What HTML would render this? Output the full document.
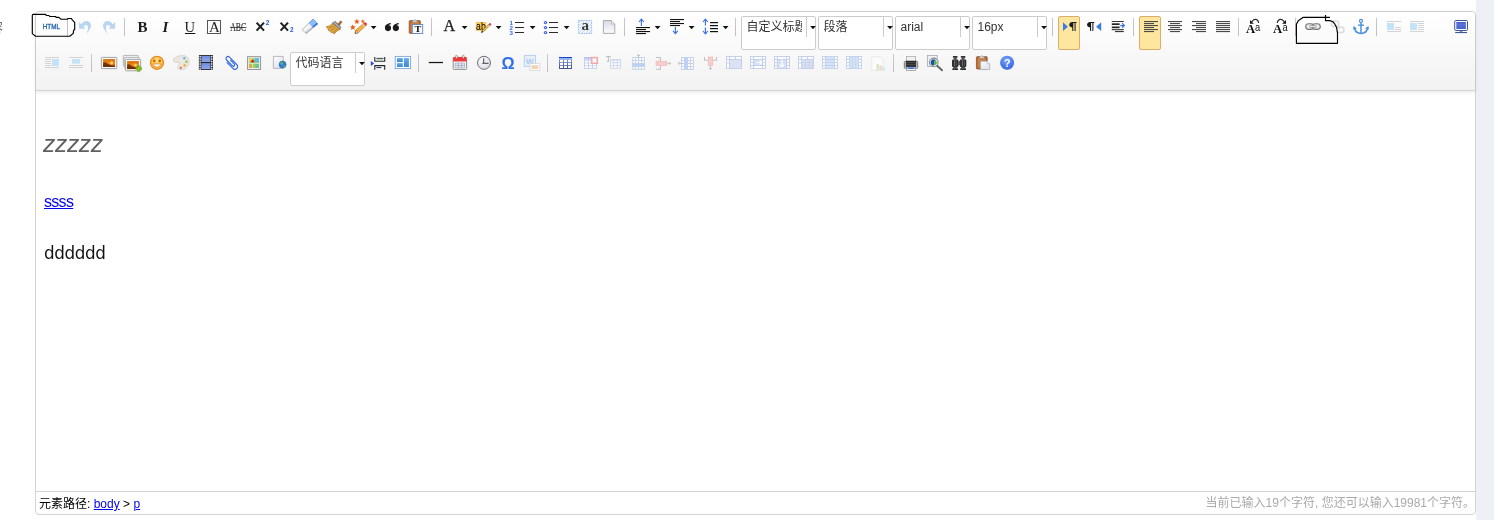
<!DOCTYPE html>
<html><head><meta charset="utf-8"><title>UEditor</title>
<style>
html,body{margin:0;padding:0;}
body{width:1494px;height:520px;overflow:hidden;background:#fff;position:relative;font-family:"Liberation Sans","Noto Sans CJK SC",sans-serif;}
.strip{position:absolute;left:1476px;top:0;width:18px;height:520px;background:#edf0f5;}
.edge{position:absolute;left:0;top:21px;font-size:13px;line-height:13px;color:#6a6a6a;width:3px;overflow:hidden;white-space:nowrap;direction:rtl;}
.ed{position:absolute;left:35px;top:11px;width:1439px;height:502px;border:1px solid #d4d4d4;border-radius:4px;background:#fff;}
.tb{position:absolute;left:0;top:0;width:1439px;height:78px;border-bottom:1px solid #d4d4d4;border-radius:3px 3px 0 0;background:linear-gradient(to bottom,#ffffff,#f2f2f2);box-shadow:0 1px 4px rgba(0,0,0,0.10);}
.cb{position:absolute;width:73px;height:32px;border:1px solid #ccc;border-radius:2px;background:#fff;}
.cb span{position:absolute;left:4.5px;top:0;width:55.5px;height:20px;line-height:20px;font-size:12px;color:#333;overflow:hidden;white-space:nowrap;}
.cb i{position:absolute;left:64px;top:0;width:0;height:20px;border-left:1px solid #ccc;}
.ck{position:absolute;width:20px;height:32px;border:1px solid #dcac6c;border-radius:2px;background:#ffe69f;}
.ct p{position:absolute;margin:0;white-space:nowrap;}
.bot{position:absolute;left:0;top:479px;width:1439px;height:22px;border-top:1px solid #d4d4d4;font-size:12px;line-height:20px;}
.bot .l{position:absolute;left:3px;top:2px;color:#000;}
.bot .r{position:absolute;right:0px;top:1px;color:#aaa;}
a{color:#0000ee;text-decoration:underline;}
svg{position:absolute;left:0;top:0;will-change:transform;}
.cb,.ct p,.bot,.edge{will-change:transform;}
svg text{font-family:"Liberation Sans","Noto Sans CJK SC",sans-serif;}
.sf{font-family:"Liberation Serif",serif !important;}
</style></head><body>
<div class="strip"></div>
<div class="edge">容</div>
<div class="ed">
<div class="tb"></div>

</div>
<div class="cb" style="left:741px;top:16px"><span>自定义标题</span><i></i></div>
<div class="cb" style="left:818px;top:16px"><span>段落</span><i></i></div>
<div class="cb" style="left:895px;top:16px"><span>arial</span><i></i></div>
<div class="cb" style="left:972px;top:16px"><span>16px</span><i></i></div>
<div class="cb" style="left:290px;top:52px"><span>代码语言</span><i></i></div>
<div class="ck" style="left:1058px;top:16px"></div><div class="ck" style="left:1139px;top:16px"></div>
<div class="ct">
<p style="left:43px;top:128px;font-size:24.6px;letter-spacing:-0.35px;line-height:32px;font-style:italic;color:#606060;">zzzzz</p>
<p style="left:44px;top:190px;font-size:16px;line-height:24px;letter-spacing:-0.7px;"><a>ssss</a></p>
<p style="left:43.5px;top:240.5px;font-size:16.8px;letter-spacing:-0.4px;line-height:24px;font-family:'DejaVu Sans',sans-serif;color:#111;">dddddd</p>
</div>
<div class="bot" style="left:36px;top:491px;position:absolute;"><span class="l">元素路径: <a>body</a> &gt; <a>p</a></span><span class="r">当前已输入19个字符, 您还可以输入19981个字符。</span></div>
<svg width="1494" height="100" viewBox="0 0 1494 100">
<defs>
<linearGradient id="sepg" x1="0" y1="0" x2="0" y2="1"><stop offset="0" stop-color="#c4c8d4"/><stop offset="0.5" stop-color="#c6c2c6"/><stop offset="1" stop-color="#c8bcbc"/></linearGradient>
<pattern id="hatch" width="2.4" height="2.4" patternUnits="userSpaceOnUse" patternTransform="rotate(45)"><rect width="2.4" height="2.4" fill="#fbfcff"/><rect width="0.9" height="2.4" fill="#c3d6f6"/></pattern>
<linearGradient id="pageg" x1="0" y1="0" x2="0.6" y2="1"><stop offset="0" stop-color="#ffffff"/><stop offset="1" stop-color="#dfe2ec"/></linearGradient>
<linearGradient id="pageg2" x1="0" y1="0" x2="0" y2="1"><stop offset="0" stop-color="#d6dae8"/><stop offset="0.6" stop-color="#eef0f6"/><stop offset="1" stop-color="#fbfbfd"/></linearGradient>
<linearGradient id="scrg" x1="0" y1="0" x2="0" y2="1"><stop offset="0" stop-color="#4458c4"/><stop offset="0.3" stop-color="#5a74d8"/><stop offset="1" stop-color="#4a62cc"/></linearGradient>
<linearGradient id="sung" x1="0" y1="0" x2="0" y2="1"><stop offset="0" stop-color="#d86a08"/><stop offset="0.55" stop-color="#f08a18"/><stop offset="1" stop-color="#a03c04"/></linearGradient>
<radialGradient id="faceg" cx="0.5" cy="0.35" r="0.7"><stop offset="0" stop-color="#ffe27a"/><stop offset="1" stop-color="#f8ac34"/></radialGradient>
<linearGradient id="filmg" x1="0" y1="0" x2="0" y2="1"><stop offset="0" stop-color="#6f8ce0"/><stop offset="1" stop-color="#8ea6ea"/></linearGradient>
<linearGradient id="tplg" x1="0" y1="0" x2="0" y2="1"><stop offset="0" stop-color="#66aeea"/><stop offset="1" stop-color="#3888d6"/></linearGradient>
<radialGradient id="clkg" cx="0.4" cy="0.35" r="0.8"><stop offset="0" stop-color="#fafafc"/><stop offset="1" stop-color="#d4d6e0"/></radialGradient>
<linearGradient id="tblg" x1="0" y1="0" x2="0" y2="1"><stop offset="0" stop-color="#1f40cc"/><stop offset="0.11" stop-color="#1f40cc"/><stop offset="0.12" stop-color="#8fb8f2"/><stop offset="0.2" stop-color="#8fb8f2"/><stop offset="0.22" stop-color="#7d94d2"/><stop offset="1" stop-color="#3b4d86"/></linearGradient>
<radialGradient id="helpg" cx="0.45" cy="0.3" r="0.8"><stop offset="0" stop-color="#78a4fa"/><stop offset="1" stop-color="#2c5ce0"/></radialGradient>
</defs>
<rect x="67" y="18" width="1" height="18" fill="url(#sepg)"/>
<rect x="124" y="18" width="1" height="18" fill="url(#sepg)"/>
<rect x="431" y="18" width="1" height="18" fill="url(#sepg)"/>
<rect x="624" y="18" width="1" height="18" fill="url(#sepg)"/>
<rect x="735" y="18" width="1" height="18" fill="url(#sepg)"/>
<rect x="1052" y="18" width="1" height="18" fill="url(#sepg)"/>
<rect x="1133" y="18" width="1" height="18" fill="url(#sepg)"/>
<rect x="1238" y="18" width="1" height="18" fill="url(#sepg)"/>
<rect x="1295" y="18" width="1" height="18" fill="url(#sepg)"/>
<rect x="1376" y="18" width="1" height="18" fill="url(#sepg)"/>
<text x="42.8" y="28.9" font-size="7" fill="#2a68b4" stroke="#2a68b4" stroke-width="0.35" textLength="17.2" lengthAdjust="spacingAndGlyphs">HTML</text>
<path d="M78.9,22 L78.9,28.7 L85.3,28.7 L83.4,26.7 Q86.3,23.6 88,26.6 Q88.6,30 86.3,33.7 Q90.8,29.5 91.1,25.6 Q90.2,21 86.4,21 Q83.4,21 81.3,24.3 Z" fill="#b9d5f1"/>
<path d="M78.9,22 L78.9,28.7 L85.3,28.7 L83.4,26.7 Q86.3,23.6 88,26.6 Q88.6,30 86.3,33.7 Q90.8,29.5 91.1,25.6 Q90.2,21 86.4,21 Q83.4,21 81.3,24.3 Z" fill="#b9d5f1" transform="translate(194,0) scale(-1,1)"/>
<text class="sf" x="137.6" y="31.9" font-size="15" font-weight="bold" fill="#1c1c1c">B</text>
<text class="sf" x="162.6" y="31.9" font-size="15" font-weight="bold" font-style="italic" fill="#1c1c1c">I</text>
<text class="sf" x="184.6" y="31.9" font-size="14.6" fill="#1c1c1c">U</text>
<rect x="185" y="33" width="10.3" height="1" fill="#111"/>
<rect x="207.5" y="20.5" width="13" height="13" fill="#fff" stroke="#555" stroke-width="1"/>
<text class="sf" x="208.9" y="32" font-size="15" fill="#222">A</text>
<text class="sf" x="230.2" y="30.7" font-size="11.8" fill="#2e2e2e" stroke="#2e2e2e" stroke-width="0.15" textLength="16" lengthAdjust="spacingAndGlyphs">ABC</text>
<rect x="230" y="27" width="16.3" height="0.9" fill="#3a3a3a"/>
<path d="M256.6,22.6 L264,30.6 M264,22.6 L256.6,30.6" stroke="#222" stroke-width="2.1" fill="none"/>
<text x="265.8" y="24.9" font-size="6.4" font-weight="bold" fill="#2255dd">2</text>
<path d="M280.6,22.6 L288,30.6 M288,22.6 L280.6,30.6" stroke="#222" stroke-width="2.1" fill="none"/>
<text x="289.9" y="32" font-size="6.4" font-weight="bold" fill="#2255dd">2</text>
<path d="M311.8,26.4 L313.2,27.8 L306.2,33.7 L304.8,32.3 Z" fill="#c2c5ca"/>
<path d="M308.7,23.3 L311.8,26.4 L304.8,32.3 L302.2,29.6 Z" fill="#f3f4f5"/>
<path d="M313,19.1 L316.5,22.5 L311.8,26.4 L308.7,23.3 Z" fill="#8cbff6"/>
<path d="M316.5,22.5 L317.9,23.9 L313.2,27.8 L311.8,26.4 Z" fill="#3f7de6"/>
<path d="M308.7,23.3 L302.2,29.6 L304.8,32.3 L306.2,33.7 L313.2,27.8" fill="none" stroke="#8e949c" stroke-width="0.6" stroke-linejoin="round"/>
<path d="M308.7,23.3 L313,19.1 L316.5,22.5 L317.9,23.9 L313.2,27.8" fill="none" stroke="#3b6fd0" stroke-width="0.6" stroke-linejoin="round"/>
<path d="M326.2,26.8 Q330,26.5 332.7,23.3 L340.2,29.2 Q336,31 334.2,33.9 Q332.5,32 331.2,32.6 Q330.2,30.4 328.6,30.6 Q328.2,28.2 326.2,26.8 Z" fill="#e2a840" stroke="#9a5a18" stroke-width="0.6"/>
<path d="M329.3,28 L333.8,25.6 M331,30.6 L335.6,27 M333.2,32.4 L337.6,28.6" stroke="#9a6424" stroke-width="0.6" fill="none"/>
<path d="M332.5,23 L335.2,21.2 L341,27 L340.2,29.3 Z" fill="#8b8f94" stroke="#5a5d62" stroke-width="0.5"/>
<path d="M334,22.4 L340.4,28.4" stroke="#d8dadd" stroke-width="0.7"/>
<path d="M338,24 L340.4,21 Q341.5,20.8 341.9,21.9 L339.6,25.2 Z" fill="#b5662a" stroke="#7c4218" stroke-width="0.5"/>
<path d="M355,33.6 L355.7,30.2 L363.6,23.2 L366,25.6 L358.2,32.8 Z" fill="#f2b13c" stroke="#a8702a" stroke-width="0.6"/>
<path d="M355,33.6 L355.7,30.2 L358.2,32.8 Z" fill="#e9d3a6" stroke="#7a5a30" stroke-width="0.5"/>
<path d="M355,33.6 L355.3,32.2 L356.2,33.1 Z" fill="#333"/>
<path d="M363.6,23.2 L364.6,22.4 Q366.2,22.2 366.8,24 L366,25.6 Z" fill="#e53b3b" stroke="#b02020" stroke-width="0.4"/>
<path d="M362.2,24.4 L364.7,26.9" stroke="#d9dbe0" stroke-width="1"/>
<polygon points="356.9,18.7 357.67,20.54 359.66,20.7 358.14,22 358.6,23.95 356.9,22.91 355.2,23.95 355.66,22 354.14,20.7 356.13,20.54" fill="#e65c14"/>
<polygon points="362.8,19.2 363.36,20.54 364.8,20.65 363.7,21.59 364.03,23 362.8,22.25 361.57,23 361.9,21.59 360.8,20.65 362.24,20.54" fill="#e65c14"/>
<polygon points="352.8,24.3 353.62,26.27 355.75,26.44 354.13,27.83 354.62,29.91 352.8,28.79 350.98,29.91 351.47,27.83 349.85,26.44 351.98,26.27" fill="#e65c14"/>
<path d="M370.7,26 h5.8 l-2.9,3.2 z" fill="#111"/>
<circle cx="388" cy="28.1" r="3.05" fill="#1a1a1a"/>
<path d="M384.95,28.3 C384.8,25 387.5,23.2 390.9,23 L390.9,24.2 C389,24.4 387.8,25.4 387.8,26.6 Z" fill="#1a1a1a"/>
<circle cx="395.9" cy="28.1" r="3.05" fill="#1a1a1a"/>
<path d="M392.85,28.3 C392.7,25 395.4,23.2 398.8,23 L398.8,24.2 C396.9,24.4 395.7,25.4 395.7,26.6 Z" fill="#1a1a1a"/>
<rect x="409.2" y="20.6" width="11.2" height="12.8" rx="1" fill="#b9692f" stroke="#8a4a1c" stroke-width="0.7"/>
<rect x="410.6" y="22.4" width="8.4" height="10" fill="#c98046"/>
<path d="M412.4,22.3 L412.4,20.6 L413.6,20.6 Q414.8,18.6 416,20.6 L417.2,20.6 L417.2,22.3 Z" fill="#d5d7dc" stroke="#8d9096" stroke-width="0.6"/>
<rect x="412.3" y="24.5" width="10.4" height="9" fill="#f7f9fd" stroke="#6584c4" stroke-width="0.9"/>
<text class="sf" x="414.5" y="32" font-size="8.8" font-weight="bold" fill="#111" textLength="6.8" lengthAdjust="spacingAndGlyphs">T</text>
<text class="sf" x="443.4" y="31.1" font-size="16.2" fill="#222" stroke="#222" stroke-width="0.25">A</text>
<path d="M461.7,26 h5.8 l-2.9,3.2 z" fill="#111"/>
<rect x="475.8" y="22" width="10.2" height="8.8" fill="#f8c55f"/>
<text x="476.1" y="30.4" font-size="10.8" fill="#000" textLength="9.6" lengthAdjust="spacingAndGlyphs">ab</text>
<path d="M481.2,32.7 L482.1,30.5 L488.9,24.1 L490.1,25.3 L483.4,31.8 Z" fill="#f6cc4c" stroke="#6a5018" stroke-width="0.5"/>
<path d="M481.2,32.7 L482.1,30.5 L483.4,31.8 Z" fill="#3a3020"/>
<path d="M488.8,24.2 L489.6,23.4 Q490.8,23.1 491.1,24.5 L490.2,25.6 Z" fill="#e44848" stroke="#a82828" stroke-width="0.4"/><path d="M487.9,25 L489.4,26.4" stroke="#ece6e0" stroke-width="0.8"/>
<path d="M495.7,26 h5.8 l-2.9,3.2 z" fill="#111"/>
<text x="509.6" y="24.7" font-size="6.2" font-weight="bold" fill="#3565e8">1</text>
<text x="509.6" y="29.7" font-size="6.2" font-weight="bold" fill="#3565e8">2</text>
<text x="509.6" y="34.6" font-size="6.2" font-weight="bold" fill="#3565e8">3</text>
<rect x="515" y="22" width="9" height="1" fill="#2a2a2a"/><rect x="515" y="27" width="9" height="1" fill="#2a2a2a"/><rect x="515" y="32" width="9" height="1" fill="#2a2a2a"/>
<path d="M529.7,26 h5.8 l-2.9,3.2 z" fill="#111"/>
<circle cx="545.5" cy="22.6" r="1.7" fill="#3a64f0"/><circle cx="545.5" cy="22.6" r="0.65" fill="#dbe6ff"/>
<circle cx="545.5" cy="27.6" r="1.7" fill="#3a64f0"/><circle cx="545.5" cy="27.6" r="0.65" fill="#dbe6ff"/>
<circle cx="545.5" cy="32.6" r="1.7" fill="#3a64f0"/><circle cx="545.5" cy="32.6" r="0.65" fill="#dbe6ff"/>
<rect x="549" y="22" width="9" height="1" fill="#2a2a2a"/><rect x="549" y="27" width="9" height="1" fill="#2a2a2a"/><rect x="549" y="32" width="9" height="1" fill="#2a2a2a"/>
<path d="M563.7,26 h5.8 l-2.9,3.2 z" fill="#111"/>
<rect x="578.4" y="20.5" width="13.2" height="13" fill="url(#hatch)" stroke="#98b8f0" stroke-width="1" stroke-dasharray="1.5,1"/>
<text class="sf" x="581.4" y="30.1" font-size="15" font-weight="bold" fill="#3a3a3a">a</text>
<path d="M603.4,20.5 L611.4,20.5 L614.8,23.9 L614.8,33.4 L603.4,33.4 Z" fill="url(#pageg2)" stroke="#a4a4a4" stroke-width="0.9"/>
<path d="M611.4,20.5 L611.4,23.9 L614.8,23.9" fill="#fff" stroke="#a9a9a9" stroke-width="0.8"/>
<path d="M641.4,25.9 L641.4,19" stroke="#3d6fe6" stroke-width="1.15" fill="none"/><path d="M639,22 L641.4,19.2 L643.8,22" stroke="#3d6fe6" stroke-width="1.15" fill="none"/>
<rect x="636" y="27" width="14" height="1.1" fill="#111"/><rect x="636" y="31" width="14" height="1.1" fill="#111"/>
<rect x="636" y="29" width="10" height="1.1" fill="#111"/><rect x="636" y="33" width="10" height="1.1" fill="#111"/>
<path d="M654.7,26 h5.8 l-2.9,3.2 z" fill="#111"/>
<rect x="670" y="19" width="14" height="1.1" fill="#111"/><rect x="670" y="23" width="14" height="1.1" fill="#111"/>
<rect x="670" y="21" width="10" height="1.1" fill="#111"/><rect x="670" y="25" width="10" height="1.1" fill="#111"/>
<path d="M675.4,27 L675.4,33.8" stroke="#3d6fe6" stroke-width="1.15" fill="none"/><path d="M673,30.8 L675.4,33.6 L677.8,30.8" stroke="#3d6fe6" stroke-width="1.15" fill="none"/>
<path d="M688.7,26 h5.8 l-2.9,3.2 z" fill="#111"/>
<path d="M705.4,25.6 L705.4,19" stroke="#3d6fe6" stroke-width="1.15" fill="none"/><path d="M703,22 L705.4,19.2 L707.8,22" stroke="#3d6fe6" stroke-width="1.15" fill="none"/>
<path d="M705.4,27.4 L705.4,34" stroke="#3d6fe6" stroke-width="1.15" fill="none"/><path d="M703,31 L705.4,33.8 L707.8,31" stroke="#3d6fe6" stroke-width="1.15" fill="none"/>
<rect x="710" y="22" width="8" height="1.2" fill="#111"/><rect x="710" y="25" width="8" height="1.2" fill="#111"/><rect x="710" y="28" width="8" height="1.2" fill="#111"/><rect x="710" y="31" width="8" height="1.2" fill="#111"/>
<path d="M722.7,26 h5.8 l-2.9,3.2 z" fill="#111"/>
<path d="M1063,22.3 L1067.9,26.65 L1063,31 Z" fill="#3b7be8"/>
<path d="M1072.3,22 h4.2 v0.9 h-0.9 v8.1 h-1.05 v-8.1 h-1.25 v8.1 h-1.05 v-3.6 a3.7,2.75 0 0 1 0,-5.4 z" fill="#1a1a1a"/>
<path d="M1090.1,22 h4.2 v0.9 h-0.9 v8.1 h-1.05 v-8.1 h-1.25 v8.1 h-1.05 v-3.6 a3.7,2.75 0 0 1 0,-5.4 z" fill="#1a1a1a"/>
<path d="M1101.2,22.3 L1096.1,26.65 L1101.2,31 Z" fill="#3b7be8"/>
<rect x="1111.8" y="21" width="12" height="0.9" fill="#222"/>
<rect x="1111.8" y="23.3" width="7.8" height="1.7" fill="#222"/><rect x="1111.8" y="26.5" width="7.8" height="1.7" fill="#222"/>
<rect x="1111.8" y="29.2" width="12" height="1" fill="#222"/>
<rect x="1115" y="31.1" width="8.8" height="1" fill="#222"/>
<path d="M1120.2,25.5 h3.6 M1122.1,23.3 L1124.4,25.5 L1122.1,27.7" stroke="#3b7be8" stroke-width="1.25" fill="none"/>
<rect x="1144" y="21" width="14" height="1.1" fill="#4a4a4a"/><rect x="1144" y="25" width="14" height="1.1" fill="#4a4a4a"/><rect x="1144" y="29" width="14" height="1.1" fill="#4a4a4a"/>
<rect x="1144" y="23" width="10" height="1.1" fill="#4a4a4a"/><rect x="1144" y="27" width="10" height="1.1" fill="#4a4a4a"/><rect x="1144" y="31" width="10" height="1.1" fill="#4a4a4a"/>
<rect x="1168" y="21" width="14" height="1.1" fill="#4a4a4a"/><rect x="1168" y="25" width="14" height="1.1" fill="#4a4a4a"/><rect x="1168" y="29" width="14" height="1.1" fill="#4a4a4a"/>
<rect x="1170" y="23" width="10" height="1.1" fill="#4a4a4a"/><rect x="1170" y="27" width="10" height="1.1" fill="#4a4a4a"/><rect x="1170" y="31" width="10" height="1.1" fill="#4a4a4a"/>
<rect x="1192" y="21" width="14" height="1.1" fill="#4a4a4a"/><rect x="1192" y="25" width="14" height="1.1" fill="#4a4a4a"/><rect x="1192" y="29" width="14" height="1.1" fill="#4a4a4a"/>
<rect x="1196" y="23" width="10" height="1.1" fill="#4a4a4a"/><rect x="1196" y="27" width="10" height="1.1" fill="#4a4a4a"/><rect x="1196" y="31" width="10" height="1.1" fill="#4a4a4a"/>
<rect x="1216" y="21" width="14" height="1.1" fill="#4a4a4a"/><rect x="1216" y="23" width="14" height="1.1" fill="#4a4a4a"/><rect x="1216" y="25" width="14" height="1.1" fill="#4a4a4a"/><rect x="1216" y="27" width="14" height="1.1" fill="#4a4a4a"/><rect x="1216" y="29" width="14" height="1.1" fill="#4a4a4a"/><rect x="1216" y="31" width="14" height="1.1" fill="#4a4a4a"/>
<text class="sf" x="1245.9" y="33" font-size="11.8" font-weight="bold" fill="#111" textLength="9.2" lengthAdjust="spacingAndGlyphs">A</text>
<text x="1255" y="31" font-size="11" fill="#111" textLength="5.2" lengthAdjust="spacingAndGlyphs">a</text>
<path d="M1251.6,22 Q1253.4,19.1 1255.6,19.2 Q1258.2,19.6 1258.7,22.8" stroke="#111" stroke-width="1.05" fill="none"/>
<path d="M1250,20 L1250,23.7 L1253.8,23.7 Z" fill="#111"/>
<text class="sf" x="1273" y="33" font-size="11.8" font-weight="bold" fill="#111" textLength="9.2" lengthAdjust="spacingAndGlyphs">A</text>
<text x="1282.6" y="31" font-size="11" fill="#111" textLength="5.2" lengthAdjust="spacingAndGlyphs">a</text>
<path d="M1277.2,22.8 Q1277.8,19.6 1280.4,19.2 Q1282.6,19.1 1284.4,22" stroke="#111" stroke-width="1.05" fill="none"/>
<path d="M1286,20 L1286,23.7 L1282.2,23.7 Z" fill="#111"/>
<rect x="1305.7" y="23.8" width="8" height="5.6" rx="2.8" fill="#dedede" stroke="#787878" stroke-width="1.1"/>
<rect x="1312.3" y="23.8" width="8" height="5.6" rx="2.8" fill="#dedede" stroke="#787878" stroke-width="1.1"/>
<rect x="1307.4" y="25.4" width="4.6" height="2.4" rx="1.2" fill="#fff"/><rect x="1314" y="25.4" width="4.6" height="2.4" rx="1.2" fill="#fff"/>
<rect x="1309.4" y="25.7" width="7.2" height="1.8" rx="0.9" fill="#f6f6f6" stroke="#808080" stroke-width="0.7"/>
<g fill="none" stroke="#dcdcdc" stroke-width="1.5"><rect x="1331.4" y="21" width="7.4" height="5.6" rx="2.6"/><rect x="1336.6" y="27" width="7.4" height="5.6" rx="2.6"/><path d="M1336,25 L1340,29"/></g>
<g fill="none" stroke="#4b90da" stroke-width="1.5"><circle cx="1361" cy="20.9" r="1.5" stroke-width="1.2"/><path d="M1361,22.6 L1361,33"/><path d="M1358,25.2 H1364" stroke-width="1.4"/><path d="M1354.4,28 Q1355.4,33.2 1361,33.4 Q1366.6,33.2 1367.6,28"/></g>
<path d="M1353,29.6 L1353.6,26 L1357,28.4 Z M1369,29.6 L1368.4,26 L1365,28.4 Z" fill="#4b90da"/>
<rect x="1387" y="21" width="14" height="1" fill="#d4d4d4"/><rect x="1387" y="31" width="14" height="1" fill="#d4d4d4"/>
<rect x="1395" y="27" width="6" height="1" fill="#d4d4d4"/><rect x="1395" y="29" width="6" height="1" fill="#d4d4d4"/>
<rect x="1387" y="23" width="7" height="7" fill="#c4e2f8"/>
<rect x="1410" y="21" width="14" height="1" fill="#d4d4d4"/><rect x="1410" y="31" width="14" height="1" fill="#d4d4d4"/>
<rect x="1418" y="23" width="6" height="1" fill="#d4d4d4"/><rect x="1418" y="25" width="6" height="1" fill="#d4d4d4"/><rect x="1418" y="27" width="6" height="1" fill="#d4d4d4"/><rect x="1418" y="29" width="6" height="1" fill="#d4d4d4"/>
<rect x="1410" y="23" width="7" height="7" fill="#c4e2f8"/>
<rect x="1454.7" y="20.5" width="12.8" height="10" rx="1.2" fill="#fff" stroke="#3c569c" stroke-width="1"/>
<rect x="1456.3" y="22" width="9.6" height="7" fill="url(#scrg)"/>
<rect x="1459.6" y="30.8" width="3" height="1.4" fill="#7d90c4"/>
<rect x="1455.2" y="32" width="11.8" height="1.1" fill="#3c569c"/>
<rect x="91" y="54" width="1" height="18" fill="url(#sepg)"/>
<rect x="418" y="54" width="1" height="18" fill="url(#sepg)"/>
<rect x="547" y="54" width="1" height="18" fill="url(#sepg)"/>
<rect x="893" y="54" width="1" height="18" fill="url(#sepg)"/>
<rect x="45" y="57" width="14" height="1" fill="#d4d4d4"/><rect x="45" y="67" width="14" height="1" fill="#d4d4d4"/>
<rect x="45" y="59" width="6" height="1" fill="#d4d4d4"/><rect x="45" y="61" width="6" height="1" fill="#d4d4d4"/><rect x="45" y="63" width="6" height="1" fill="#d4d4d4"/><rect x="45" y="65" width="6" height="1" fill="#d4d4d4"/>
<rect x="52" y="59" width="7" height="7" fill="#c4e2f8"/>
<rect x="69" y="57" width="14" height="1" fill="#d4d4d4"/><rect x="69" y="65" width="14" height="1" fill="#d4d4d4"/><rect x="69" y="67" width="14" height="1" fill="#d4d4d4"/>
<rect x="72" y="59" width="8" height="4.6" fill="#c4e2f8"/>
<rect x="101.4" y="57.4" width="15.4" height="11.2" rx="0.8" fill="#fafafa" stroke="#9a9a9a" stroke-width="0.9"/><rect x="103.1" y="59.1" width="12" height="7.8" fill="url(#sung)"/><circle cx="111.56" cy="63" r="1.7" fill="#f8cf68" opacity="0.9"/><path d="M103.1,62.44 Q106.02,61.32 108.33,64.34 L115.1,66.14 L115.1,66.9 L103.1,66.9 Z" fill="#5a2408" opacity="0.8"/>
<rect x="123.3" y="55.4" width="15" height="10.6" rx="0.8" fill="#f4f4f4" stroke="#a6a6a6" stroke-width="0.8"/>
<rect x="124.3" y="57.4" width="15" height="10.6" rx="0.8" fill="#f4f4f4" stroke="#a6a6a6" stroke-width="0.8"/>
<rect x="125.4" y="59.4" width="15.2" height="11.4" rx="0.8" fill="#fafafa" stroke="#9a9a9a" stroke-width="0.9"/><rect x="127.1" y="61.1" width="11.8" height="8" fill="url(#sung)"/><circle cx="135.43" cy="65.1" r="1.7" fill="#f8cf68" opacity="0.9"/><path d="M127.1,64.53 Q129.96,63.39 132.24,66.47 L138.9,68.29 L138.9,69.1 L127.1,69.1 Z" fill="#5a2408" opacity="0.8"/>
<path d="M135.7,67.5 h1.9 v-1.9 h2.2 v1.9 h1.9 v2.2 h-1.9 v1.9 h-2.2 v-1.9 h-1.9 z" fill="#86c11a" stroke="#5f9a08" stroke-width="0.4"/>
<circle cx="157" cy="62.8" r="6.5" fill="url(#faceg)" stroke="#e8891c" stroke-width="1.3"/>
<ellipse cx="154.3" cy="60.9" rx="1.15" ry="1.45" fill="#c5560c"/><ellipse cx="159.7" cy="60.9" rx="1.15" ry="1.45" fill="#c5560c"/>
<path d="M152.6,64 Q157,70.4 161.4,64 Z" fill="#fff" stroke="#cf6a10" stroke-width="0.6"/>
<path d="M173.2,60.6 C173.6,56.6 181,54.4 186,56.2 C190.2,58 189.8,64.6 186.4,67.6 C183.4,70.4 178.6,70.6 177.8,68 C177.2,65.8 180,65.2 179.4,63 C178.6,61 173,63.6 173.2,60.6 Z" fill="#ebe7df" stroke="#cfcac0" stroke-width="0.7"/>
<circle cx="184.4" cy="58.2" r="1.2" fill="#6ab8e8"/><circle cx="186.4" cy="61.8" r="1.2" fill="#8cc84c"/><circle cx="184.6" cy="65.4" r="1.2" fill="#f0a030"/><circle cx="180.8" cy="67.8" r="1.1" fill="#e05a4a"/>
<rect x="198.9" y="55" width="14.1" height="15" fill="#2c2c2c"/>
<rect x="201.4" y="55.9" width="9" height="6" fill="url(#filmg)"/><rect x="201.4" y="63.1" width="9" height="6" fill="url(#filmg)"/>
<rect x="199.5" y="55.9" width="1.3" height="1.5" fill="#fff"/><rect x="211.1" y="55.9" width="1.3" height="1.5" fill="#fff"/>
<rect x="199.5" y="58.35" width="1.3" height="1.5" fill="#fff"/><rect x="211.1" y="58.35" width="1.3" height="1.5" fill="#fff"/>
<rect x="199.5" y="60.8" width="1.3" height="1.5" fill="#fff"/><rect x="211.1" y="60.8" width="1.3" height="1.5" fill="#fff"/>
<rect x="199.5" y="63.25" width="1.3" height="1.5" fill="#fff"/><rect x="211.1" y="63.25" width="1.3" height="1.5" fill="#fff"/>
<rect x="199.5" y="65.7" width="1.3" height="1.5" fill="#fff"/><rect x="211.1" y="65.7" width="1.3" height="1.5" fill="#fff"/>
<rect x="199.5" y="68.15" width="1.3" height="1.5" fill="#fff"/><rect x="211.1" y="68.15" width="1.3" height="1.5" fill="#fff"/>
<g transform="translate(231.2,62.8) rotate(45) scale(0.9)" fill="none" stroke="#2b62e0" stroke-width="1.2" stroke-linecap="round"><path d="M-3.4,3.1 L5.8,3.1 A3.1,3.1 0 0 0 5.8,-3.1 L-5.8,-3.1 A2.25,2.25 0 0 0 -5.8,1.4 L3.4,1.4 A1.45,1.45 0 0 0 3.4,-1.5 L-2.6,-1.5"/></g>
<rect x="247.6" y="56.7" width="13" height="12.8" fill="#ececec" stroke="#8c8c8c" stroke-width="0.9"/>
<rect x="249.2" y="58.3" width="9.8" height="9.6" fill="#8fd060"/>
<rect x="254.8" y="58.3" width="4.2" height="4.2" fill="#5cbcec"/><rect x="249.2" y="58.3" width="2.6" height="3" fill="#f0d050"/><rect x="249.2" y="64.6" width="3.4" height="3.3" fill="#f0a040"/><rect x="255.6" y="64.2" width="3.4" height="3.7" fill="#6ec0a0"/>
<path d="M252.6,58.3 V67.9 M249.2,63.4 H259" stroke="#f4f4e0" stroke-width="0.7"/>
<path d="M252.6,59.3 L254.5,61.2 L252.6,63.1 L250.7,61.2 Z" fill="#e02020"/>
<path d="M273.4,56.4 L283.2,56.4 L283.2,68.4 L273.4,68.4 Z" fill="url(#pageg)" stroke="#aaa" stroke-width="0.8"/>
<circle cx="282.6" cy="64.6" r="3.5" fill="#2f7cd8" stroke="#1c5aa8" stroke-width="0.5"/>
<path d="M280.4,62.6 Q282,61.6 283.2,62.8 Q283,64.6 281.4,65 Q280,64.4 280.4,62.6 Z M283.4,65.6 Q285,65 285.2,66.4 Q284.2,67.6 283.2,67 Z" fill="#6cc43c"/>
<path d="M370.8,60.9 L374.2,63.5 L370.8,66.1 Z" fill="#2a48d8"/>
<path d="M374.8,57 V61.2 H384.7 V57" stroke="#2a2a2a" stroke-width="1.1" fill="#f4f6f4"/>
<path d="M376.4,58.4 H383.4" stroke="#2a2a2a" stroke-width="0.9"/><path d="M376.4,59.4 H383.4" stroke="#9cc8b0" stroke-width="0.7"/>
<path d="M374.8,69.8 V65.6 H384.7 V69.8" stroke="#2a2a2a" stroke-width="1.1" fill="#f4f6f4"/>
<path d="M376.4,67.6 H381.2" stroke="#1c2c6c" stroke-width="1"/>
<rect x="395.2" y="56.4" width="15.4" height="12.2" fill="#fff" stroke="#7aa6dc" stroke-width="0.9"/>
<rect x="397" y="58.1" width="5.8" height="3.9" fill="url(#tplg)"/><rect x="397" y="63.1" width="5.8" height="3.9" fill="url(#tplg)"/><rect x="403.9" y="58.1" width="5" height="8.9" fill="url(#tplg)"/>
<rect x="428.8" y="61.9" width="14.2" height="1.25" fill="#151515"/>
<rect x="453.2" y="57.4" width="13.4" height="12" rx="0.8" fill="#fbfbfd" stroke="#727272" stroke-width="0.8"/>
<path d="M453.2,61.6 V58.2 Q453.2,57 454.4,57 H465.4 Q466.6,57 466.6,58.2 V61.6 Z" fill="#e93a3a"/>
<rect x="455.6" y="55.2" width="1.8" height="3.2" rx="0.8" fill="#f0f0f0" stroke="#a05050" stroke-width="0.5"/><rect x="462.4" y="55.2" width="1.8" height="3.2" rx="0.8" fill="#f0f0f0" stroke="#a05050" stroke-width="0.5"/>
<path d="M455.2,63 H464.6 V67.8 H455.2 Z M455.2,65.4 H464.6 M458.3,63 V67.8 M461.5,63 V67.8" fill="#e8ecf4" stroke="#98a2b8" stroke-width="0.7"/>
<circle cx="484" cy="62.8" r="6.5" fill="url(#clkg)" stroke="#6e6e6e" stroke-width="1"/>
<path d="M483.7,58.4 V63.3 H488.6 M482.3,63.3 H483.7" stroke="#222" stroke-width="0.85" fill="none"/>
<text x="501.4" y="68.8" font-size="16.4" font-weight="bold" fill="#2f6fe8">Ω</text>
<rect x="524.2" y="55.4" width="11.4" height="11" fill="#e6effb" stroke="#b4cdee" stroke-width="0.9"/>
<text x="525.9" y="64" font-size="8" font-weight="bold" fill="#a8c6ee">W</text>
<rect x="530" y="63.6" width="9.8" height="7" fill="#fcfcfc" stroke="#d6d6d6" stroke-width="0.8"/>
<rect x="531.6" y="65.2" width="6.6" height="3.8" fill="#f3d3b6"/>
<rect x="559" y="57" width="13" height="12" fill="url(#tblg)"/>
<rect x="560" y="59.8" width="3" height="2.25" fill="#fff"/>
<rect x="564" y="59.8" width="3" height="2.25" fill="#fff"/>
<rect x="568" y="59.8" width="3" height="2.25" fill="#fff"/>
<rect x="560" y="62.8" width="3" height="2.25" fill="#fff"/>
<rect x="564" y="62.8" width="3" height="2.25" fill="#fff"/>
<rect x="568" y="62.8" width="3" height="2.25" fill="#fff"/>
<rect x="560" y="65.8" width="3" height="2.25" fill="#fff"/>
<rect x="564" y="65.8" width="3" height="2.25" fill="#fff"/>
<rect x="568" y="65.8" width="3" height="2.25" fill="#fff"/>
<rect x="584" y="57" width="13" height="12" fill="#c8d2ec"/><rect x="585" y="58" width="3" height="1.75" fill="#fff"/><rect x="589" y="58" width="3" height="1.75" fill="#fff"/><rect x="593" y="58" width="3" height="1.75" fill="#fff"/><rect x="585" y="60.75" width="3" height="1.75" fill="#fff"/><rect x="589" y="60.75" width="3" height="1.75" fill="#fff"/><rect x="593" y="60.75" width="3" height="1.75" fill="#fff"/><rect x="585" y="63.5" width="3" height="1.75" fill="#fff"/><rect x="589" y="63.5" width="3" height="1.75" fill="#fff"/><rect x="593" y="63.5" width="3" height="1.75" fill="#fff"/><rect x="585" y="66.25" width="3" height="1.75" fill="#fff"/><rect x="589" y="66.25" width="3" height="1.75" fill="#fff"/><rect x="593" y="66.25" width="3" height="1.75" fill="#fff"/>
<rect x="584" y="57" width="13" height="2.4" fill="#b8c6f0"/>
<rect x="591.4" y="57.3" width="6.2" height="6.2" fill="#f7c4c4" stroke="#f0a4a4" stroke-width="0.9"/>
<path d="M593,58.9 L596,61.9 M596,58.9 L593,61.9" stroke="#fff" stroke-width="1.5"/>
<path d="M606,56.6 H611 M608.5,56.6 V61.4 H607" stroke="#c4c4c4" stroke-width="1.1" fill="none"/>
<rect x="610" y="59.4" width="11" height="9.4" fill="#d0d8ee"/><rect x="611" y="60.4" width="2.33" height="1.8" fill="#fff"/><rect x="614.33" y="60.4" width="2.33" height="1.8" fill="#fff"/><rect x="617.67" y="60.4" width="2.33" height="1.8" fill="#fff"/><rect x="611" y="63.2" width="2.33" height="1.8" fill="#fff"/><rect x="614.33" y="63.2" width="2.33" height="1.8" fill="#fff"/><rect x="617.67" y="63.2" width="2.33" height="1.8" fill="#fff"/><rect x="611" y="66" width="2.33" height="1.8" fill="#fff"/><rect x="614.33" y="66" width="2.33" height="1.8" fill="#fff"/><rect x="617.67" y="66" width="2.33" height="1.8" fill="#fff"/>
<rect x="610" y="59.4" width="11" height="1" fill="#c8d2ec"/>
<rect x="632.2" y="57" width="12.8" height="12.8" fill="#c8d2ec"/><rect x="633.2" y="58" width="1.95" height="1.95" fill="#fff"/><rect x="636.15" y="58" width="1.95" height="1.95" fill="#fff"/><rect x="639.1" y="58" width="1.95" height="1.95" fill="#fff"/><rect x="642.05" y="58" width="1.95" height="1.95" fill="#fff"/><rect x="633.2" y="60.95" width="1.95" height="1.95" fill="#fff"/><rect x="636.15" y="60.95" width="1.95" height="1.95" fill="#fff"/><rect x="639.1" y="60.95" width="1.95" height="1.95" fill="#fff"/><rect x="642.05" y="60.95" width="1.95" height="1.95" fill="#fff"/><rect x="633.2" y="63.9" width="1.95" height="1.95" fill="#fff"/><rect x="636.15" y="63.9" width="1.95" height="1.95" fill="#fff"/><rect x="639.1" y="63.9" width="1.95" height="1.95" fill="#fff"/><rect x="642.05" y="63.9" width="1.95" height="1.95" fill="#fff"/><rect x="633.2" y="66.85" width="1.95" height="1.95" fill="#fff"/><rect x="636.15" y="66.85" width="1.95" height="1.95" fill="#fff"/><rect x="639.1" y="66.85" width="1.95" height="1.95" fill="#fff"/><rect x="642.05" y="66.85" width="1.95" height="1.95" fill="#fff"/>
<rect x="632.2" y="63.6" width="12.8" height="2.8" fill="#bcd2f4"/>
<path d="M638.5,59 V54.4 M637,56 L638.5,54.4 L640,56" stroke="#c0c0c0" stroke-width="0.9" fill="none"/>
<path d="M656,57.5 H660.4 V69.3 H656" stroke="#c2c2c2" stroke-width="1.1" fill="none"/>
<rect x="656" y="61.2" width="10.8" height="4.4" fill="#f6cccc" stroke="#f0b4b4" stroke-width="0.6"/>
<path d="M667,63.4 H670.8 M669.2,61.9 L670.8,63.4 L669.2,64.9" stroke="#c0c0c0" stroke-width="0.9" fill="none"/>
<rect x="681" y="57" width="13" height="13" fill="#c8d2ec"/><rect x="682" y="58" width="2" height="2" fill="#fff"/><rect x="685" y="58" width="2" height="2" fill="#fff"/><rect x="688" y="58" width="2" height="2" fill="#fff"/><rect x="691" y="58" width="2" height="2" fill="#fff"/><rect x="682" y="61" width="2" height="2" fill="#fff"/><rect x="685" y="61" width="2" height="2" fill="#fff"/><rect x="688" y="61" width="2" height="2" fill="#fff"/><rect x="691" y="61" width="2" height="2" fill="#fff"/><rect x="682" y="64" width="2" height="2" fill="#fff"/><rect x="685" y="64" width="2" height="2" fill="#fff"/><rect x="688" y="64" width="2" height="2" fill="#fff"/><rect x="691" y="64" width="2" height="2" fill="#fff"/><rect x="682" y="67" width="2" height="2" fill="#fff"/><rect x="685" y="67" width="2" height="2" fill="#fff"/><rect x="688" y="67" width="2" height="2" fill="#fff"/><rect x="691" y="67" width="2" height="2" fill="#fff"/>
<rect x="684.4" y="57" width="3.4" height="13" fill="#bcd2f4"/>
<path d="M682.6,63.4 H678 M679.6,61.9 L678,63.4 L679.6,64.9" stroke="#c0c0c0" stroke-width="0.9" fill="none"/>
<path d="M704.5,57 V60.2 H716.5 V57" stroke="#c2c2c2" stroke-width="1.1" fill="none"/>
<rect x="708.2" y="57" width="4.6" height="8.6" fill="#f6cccc" stroke="#f0b4b4" stroke-width="0.6"/>
<path d="M710.5,65.8 V69.6 M709,68 L710.5,69.6 L712,68" stroke="#c0c0c0" stroke-width="0.9" fill="none"/>
<rect x="726" y="56" width="16" height="13" fill="#c6d0ea"/><rect x="727" y="57" width="2" height="2" fill="#fff"/><rect x="730" y="57" width="5" height="2" fill="#fff"/><rect x="736" y="57" width="5" height="2" fill="#fff"/><rect x="727" y="60" width="2" height="2.5" fill="#fff"/><rect x="727" y="63.5" width="2" height="4.5" fill="#fff"/><rect x="730" y="60" width="11" height="8" fill="#dbe2f4"/>
<rect x="750" y="56" width="16" height="13" fill="#c6d0ea"/><rect x="751" y="57" width="2" height="2" fill="#fff"/><rect x="754" y="57" width="8" height="2" fill="#fff"/><rect x="763" y="57" width="2" height="2" fill="#fff"/><rect x="751" y="60" width="2" height="2" fill="#fff"/><rect x="763" y="60" width="2" height="2" fill="#fff"/><rect x="751" y="63" width="2" height="2" fill="#fff"/><rect x="763" y="63" width="2" height="2" fill="#fff"/><rect x="751" y="66" width="2" height="2" fill="#fff"/><rect x="754" y="66" width="8" height="2" fill="#fff"/><rect x="763" y="66" width="2" height="2" fill="#fff"/><rect x="754" y="60" width="8" height="5" fill="#d4e2f6"/>
<path d="M756.6,62.5 H761.6 M759.6,60.5 L761.7,62.5 L759.6,64.5" stroke="#fff" stroke-width="1.1" fill="none"/>
<rect x="774" y="56" width="16" height="13" fill="#c6d0ea"/><rect x="775" y="57" width="2" height="2" fill="#fff"/><rect x="778" y="57" width="8" height="2" fill="#fff"/><rect x="787" y="57" width="2" height="2" fill="#fff"/><rect x="775" y="60" width="2" height="2" fill="#fff"/><rect x="787" y="60" width="2" height="2" fill="#fff"/><rect x="775" y="63" width="2" height="2" fill="#fff"/><rect x="787" y="63" width="2" height="2" fill="#fff"/><rect x="775" y="66" width="2" height="2" fill="#fff"/><rect x="787" y="66" width="2" height="2" fill="#fff"/><rect x="778" y="60" width="8" height="8" fill="#d4e0f6"/>
<path d="M782,59.6 V66.6 M779.8,64.6 L782,66.8 L784.2,64.6" stroke="#fff" stroke-width="1.2" fill="none"/>
<rect x="798" y="56" width="16" height="13" fill="#c6d0ea"/><rect x="799" y="57" width="2" height="2" fill="#fff"/><rect x="802" y="57" width="5" height="2" fill="#fff"/><rect x="808" y="57" width="5" height="2" fill="#fff"/><rect x="799" y="60" width="2" height="2.5" fill="#fff"/><rect x="799" y="63.5" width="2" height="4.5" fill="#fff"/><rect x="802" y="60" width="3" height="2" fill="#dde2f3"/><rect x="805.8" y="60" width="3" height="2" fill="#dde2f3"/><rect x="809.6" y="60" width="3" height="2" fill="#dde2f3"/><rect x="802" y="62.8" width="3" height="2" fill="#dde2f3"/><rect x="805.8" y="62.8" width="3" height="2" fill="#dde2f3"/><rect x="809.6" y="62.8" width="3" height="2" fill="#dde2f3"/><rect x="802" y="65.6" width="3" height="2" fill="#dde2f3"/><rect x="805.8" y="65.6" width="3" height="2" fill="#dde2f3"/><rect x="809.6" y="65.6" width="3" height="2" fill="#dde2f3"/>
<rect x="822" y="56" width="16" height="13" fill="#c4d4ee"/><rect x="823" y="57" width="2" height="2" fill="#fff"/><rect x="835" y="57" width="2" height="2" fill="#fff"/><rect x="826" y="57" width="8" height="2" fill="#d4e2f6"/><rect x="823" y="60" width="2" height="2" fill="#fff"/><rect x="835" y="60" width="2" height="2" fill="#fff"/><rect x="826" y="60" width="8" height="2" fill="#d4e2f6"/><rect x="823" y="63" width="2" height="2" fill="#fff"/><rect x="835" y="63" width="2" height="2" fill="#fff"/><rect x="826" y="63" width="8" height="2" fill="#d4e2f6"/><rect x="823" y="66" width="2" height="2" fill="#fff"/><rect x="835" y="66" width="2" height="2" fill="#fff"/><rect x="826" y="66" width="8" height="2" fill="#d4e2f6"/>
<rect x="846" y="56" width="16" height="13" fill="#c4d4ee"/><rect x="847" y="57" width="2" height="2" fill="#fff"/><rect x="859" y="57" width="2" height="2" fill="#fff"/><rect x="847" y="60" width="2" height="2" fill="#fff"/><rect x="859" y="60" width="2" height="2" fill="#fff"/><rect x="847" y="63" width="2" height="2" fill="#fff"/><rect x="859" y="63" width="2" height="2" fill="#fff"/><rect x="847" y="66" width="2" height="2" fill="#fff"/><rect x="859" y="66" width="2" height="2" fill="#fff"/><rect x="850" y="57" width="2.2" height="11" fill="#d4e2f6"/><rect x="852.9" y="57" width="2.2" height="11" fill="#d4e2f6"/><rect x="855.8" y="57" width="2.2" height="11" fill="#d4e2f6"/>
<path d="M871.8,56.8 L880.4,56.8 L883.2,59.6 L883.2,70.4 L871.8,70.4 Z" fill="#fbfbfb" stroke="#e6e6e6" stroke-width="0.8"/>
<rect x="876.4" y="64" width="2.6" height="6.6" fill="#d6e9cc"/><rect x="879.4" y="65.6" width="2.6" height="5" fill="#f4d9c6"/><rect x="882.4" y="67" width="2.4" height="3.6" fill="#d0e5f4"/>
<rect x="906.4" y="56.4" width="9.2" height="5" fill="#f1f1f3" stroke="#adadad" stroke-width="0.8"/>
<rect x="904.3" y="61.4" width="13.4" height="7" rx="1" fill="#dcdcdc" stroke="#5a5a5a" stroke-width="0.8"/>
<rect x="905.8" y="60.8" width="10.4" height="6.6" fill="#2a2a2a"/>
<path d="M905.8,62.6 H916.2 M905.8,64.6 H916.2" stroke="#5a5a5a" stroke-width="0.7"/>
<rect x="906.6" y="67.2" width="8.8" height="3.4" fill="#fdfdfd" stroke="#8a8a8a" stroke-width="0.7"/>
<rect x="907.6" y="67.6" width="6.8" height="1.3" fill="#2a6ae8"/>
<rect x="927.4" y="55.4" width="9.8" height="11" fill="#eef0f8" stroke="#a8a8b0" stroke-width="0.8"/>
<circle cx="933.8" cy="62.4" r="4.3" fill="#f6f9fd" stroke="#8c8c8c" stroke-width="1.1"/>
<path d="M930.6,62.4 A3.2,3.2 0 0 1 935.8,59.9 Q933.4,62 934,65.5 A3.2,3.2 0 0 1 930.6,62.4 Z" fill="#1c50a8"/>
<path d="M934.6,60 Q936.6,60.4 937,62.4 Q936.8,64.8 934.4,65.5 Q933.4,62.4 934.6,60 Z" fill="#58b848"/>
<path d="M937.4,65.9 L942,70.2" stroke="#666" stroke-width="2" stroke-linecap="round"/>
<rect x="952.9" y="56" width="4.6" height="1.7" rx="0.5" fill="#2e2e2e"/>
<rect x="953.7" y="57.5" width="3" height="2.1" fill="#4a4a4a"/>
<rect x="952" y="59.4" width="6.4" height="7.5" rx="1" fill="#2e2e2e"/>
<rect x="953.2" y="66.7" width="4" height="1.6" fill="#4a4a4a"/>
<rect x="952.3" y="68.2" width="5.8" height="1.8" rx="0.5" fill="#2e2e2e"/>
<rect x="954" y="60.2" width="1.2" height="6" fill="#686868"/>
<rect x="956.1" y="60.2" width="0.8" height="6" fill="#505050"/>
<rect x="960.8" y="56" width="4.6" height="1.7" rx="0.5" fill="#2e2e2e"/>
<rect x="961.6" y="57.5" width="3" height="2.1" fill="#4a4a4a"/>
<rect x="959.9" y="59.4" width="6.4" height="7.5" rx="1" fill="#2e2e2e"/>
<rect x="961.1" y="66.7" width="4" height="1.6" fill="#4a4a4a"/>
<rect x="960.2" y="68.2" width="5.8" height="1.8" rx="0.5" fill="#2e2e2e"/>
<rect x="961.9" y="60.2" width="1.2" height="6" fill="#686868"/>
<rect x="964" y="60.2" width="0.8" height="6" fill="#505050"/>
<rect x="958.2" y="61" width="1.9" height="4.2" fill="#5a5a5a"/>
<rect x="976.4" y="56.6" width="10.8" height="12.4" rx="1" fill="#b9672c" stroke="#8a481a" stroke-width="0.7"/>
<rect x="977.8" y="58.6" width="8" height="9" fill="#c98248"/>
<path d="M979.2,58.2 L979.2,56.6 L980.6,56.6 Q981.8,54.6 983,56.6 L984.4,56.6 L984.4,58.2 Z" fill="#dcdee2" stroke="#909398" stroke-width="0.6"/>
<path d="M980.6,61.2 L987.2,61.2 L989.8,63.8 L989.8,69.6 L980.6,69.6 Z" fill="url(#pageg)" stroke="#a4a8b4" stroke-width="0.7"/>
<path d="M987.2,61.2 L987.2,63.8 L989.8,63.8" fill="#fff" stroke="#a4a8b4" stroke-width="0.6"/>
<circle cx="1007.1" cy="62.8" r="7" fill="url(#helpg)"/>
<text x="1003.9" y="66.9" font-size="10.8" font-weight="bold" fill="#fff">?</text>
<path d="M810.1,26 h5.8 l-2.9,3.2 z" fill="#111"/>
<path d="M887.1,26 h5.8 l-2.9,3.2 z" fill="#111"/>
<path d="M964.1,26 h5.8 l-2.9,3.2 z" fill="#111"/>
<path d="M1041.1,26 h5.8 l-2.9,3.2 z" fill="#111"/>
<path d="M359.1,62 h5.8 l-2.9,3.2 z" fill="#111"/>
<path d="M32.9,14.3 L45.6,14.3 L46.2,15.5 L49,15.5 L49.7,16.5 L55.4,16.5 L56.2,17.4 L58.8,17.4 L61.1,19.2 L67.2,19.2 L68.1,18.5 L71.5,18.5 L72.4,20.1 L74.7,22.4 L74.7,29.6 L73.6,30.3 L73.3,33.4 L69.8,36.2 L35.5,36.2 L32.3,33.6 L32.3,15.2 Z" fill="none" stroke="#000" stroke-width="1.15" stroke-linejoin="round"/>
<path d="M1325.5,15.1 L1325.5,20.6 L1330,20.6 M1303.3,17.3 L1329.9,17.3 M1330,20.6 L1332.9,21.7 L1335,24.4 L1336.6,27.5 L1337.5,33 L1337.5,43.3 L1296.4,43.3 L1296.4,24.2 L1298.2,20.9 L1300,19.5 L1303.3,17.3" fill="none" stroke="#000" stroke-width="1.15" stroke-linejoin="round"/>
</svg>
</body></html>
